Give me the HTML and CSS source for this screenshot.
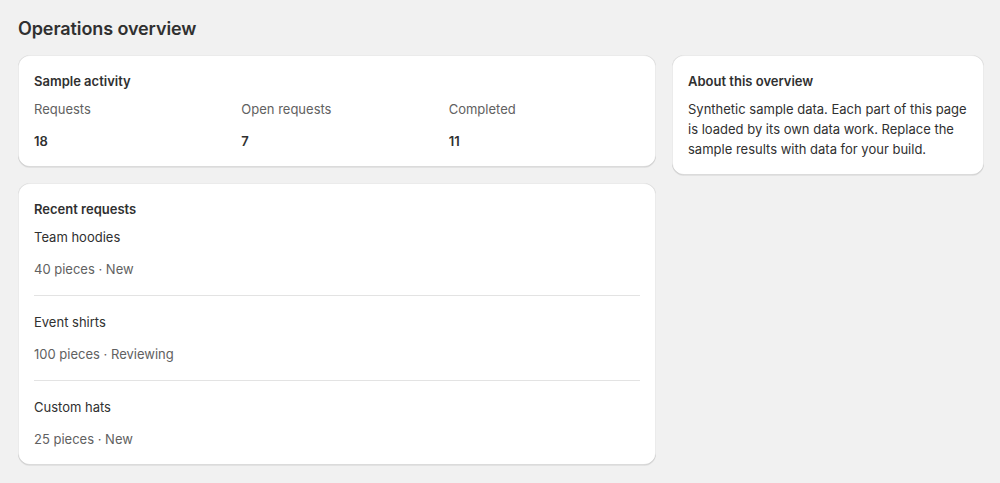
FILE: index.html
```html
<!DOCTYPE html>
<html lang="en">
<head>
<meta charset="utf-8">
<title>Operations overview</title>
<link rel="stylesheet" href="styles.css">
</head>
<body>
<div class="page">
  <h1 class="page-title">Operations overview</h1>
  <div class="layout">
    <div class="primary">
      <section class="card">
        <h2 class="card-title">Sample activity</h2>
        <div class="stats">
          <div class="stat">
            <div class="stat-label">Requests</div>
            <div class="stat-value">18</div>
          </div>
          <div class="stat">
            <div class="stat-label">Open requests</div>
            <div class="stat-value">7</div>
          </div>
          <div class="stat">
            <div class="stat-label">Completed</div>
            <div class="stat-value">11</div>
          </div>
        </div>
      </section>
      <section class="card">
        <h2 class="card-title">Recent requests</h2>
        <ul class="list">
          <li class="item">
            <div class="item-name">Team hoodies</div>
            <div class="item-meta">40 pieces · New</div>
          </li>
          <li class="item">
            <div class="item-name">Event shirts</div>
            <div class="item-meta">100 pieces · Reviewing</div>
          </li>
          <li class="item">
            <div class="item-name">Custom hats</div>
            <div class="item-meta">25 pieces · New</div>
          </li>
        </ul>
      </section>
    </div>
    <div class="secondary">
      <section class="card">
        <h2 class="card-title">About this overview</h2>
        <p class="card-text">Synthetic sample data. Each part of this page is loaded by its own data work. Replace the sample results with data for your build.</p>
      </section>
    </div>
  </div>
</div>
</body>
</html>
```

FILE: styles.css
```css
* { box-sizing: border-box; }
html, body { margin: 0; padding: 0; }
body {
  background: #f1f1f1;
  font-family: Inter, "Noto Sans", "Liberation Sans", sans-serif;
  font-size: 13px;
  line-height: 20px;
  color: #303030;
}
.page {
  padding: 17px 16px 16px 18px;
}
.page-title {
  margin: 0 0 14px;
  font-size: 18px;
  line-height: 24px;
  font-weight: 600;
  letter-spacing: -0.1px;
  color: #303030;
}
.layout {
  display: grid;
  grid-template-columns: 638px 312px;
  column-gap: 16px;
  align-items: start;
}
.primary, .secondary {
  display: flex;
  flex-direction: column;
  gap: 16px;
}
.card {
  background: #ffffff;
  border-radius: 12px;
  padding: 16px;
  display: flex;
  flex-direction: column;
  gap: 8px;
  box-shadow:
    0 1px 0 0 rgba(26, 26, 26, 0.07),
    inset 1px 0 0 0 rgba(0, 0, 0, 0.08),
    inset -1px 0 0 0 rgba(0, 0, 0, 0.08),
    inset 0 -1px 0 0 rgba(0, 0, 0, 0.14),
    inset 0 1px 0 0 rgba(204, 204, 204, 0.4);
}
.card-title {
  margin: 0;
  font-size: 13px;
  line-height: 20px;
  font-weight: 600;
  color: #303030;
}
.card-text {
  margin: 0;
  color: #303030;
}
.stats {
  display: grid;
  grid-template-columns: repeat(3, 1fr);
  column-gap: 16px;
}
.stat {
  display: flex;
  flex-direction: column;
  gap: 12px;
}
.stat-label { color: #616161; }
.stat-value { font-weight: 600; color: #303030; }
.list {
  list-style: none;
  margin: 0;
  padding: 0;
}
.item {
  display: flex;
  flex-direction: column;
  gap: 12px;
  padding: 16px 0;
  border-top: 1px solid #e3e3e3;
}
.item:first-child {
  padding-top: 0;
  border-top: none;
}
.item:last-child { padding-bottom: 0; }
.item-name { color: #303030; }
.item-meta { color: #616161; }
```
